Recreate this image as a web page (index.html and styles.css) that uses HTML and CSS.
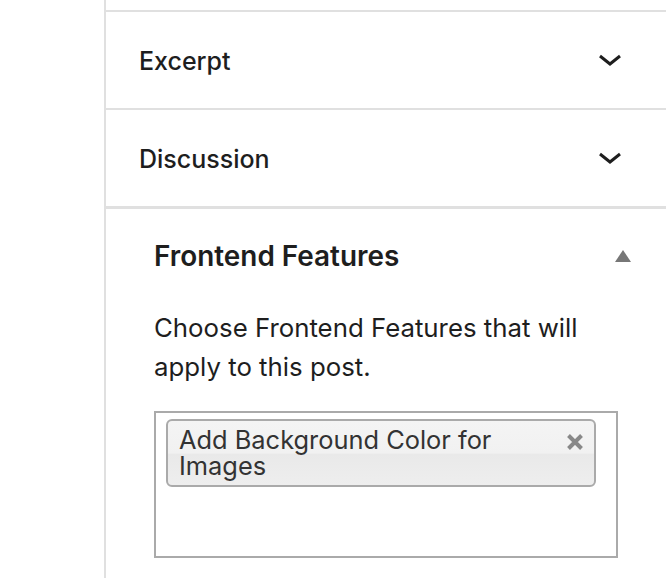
FILE: index.html
```html
<!DOCTYPE html>
<html>
<head>
<meta charset="utf-8">
<link rel="stylesheet" href="styles.css">
</head>
<body>
<div class="page">
  <div class="gutter"></div>
  <div class="sidebar">
    <div class="panel">
      <span class="panel-title">Excerpt</span>
      <svg class="chevron" width="24" height="24" viewBox="0 0 24 24"><path d="M2 7 L12 15 L22 7" fill="none" stroke="#1e1e1e" stroke-width="3"/></svg>
    </div>
    <div class="panel">
      <span class="panel-title">Discussion</span>
      <svg class="chevron" width="24" height="24" viewBox="0 0 24 24"><path d="M2 7 L12 15 L22 7" fill="none" stroke="#1e1e1e" stroke-width="3"/></svg>
    </div>
    <div class="metabox">
      <div class="metabox-head">
        <h2 class="metabox-title">Frontend Features</h2>
        <span class="toggle"></span>
      </div>
      <p class="desc">Choose Frontend Features that will apply to this post.</p>
      <div class="select">
        <div class="choice">
          <span class="choice-text">Add Background Color for Images</span>
          <svg class="remove" width="18" height="18" viewBox="0 0 18 18"><path d="M2.5 2.5 L15.5 15.5 M15.5 2.5 L2.5 15.5" stroke="#888" stroke-width="4" stroke-linecap="butt"/></svg>
        </div>
      </div>
    </div>
  </div>
</div>
</body>
</html>
```

FILE: styles.css
```css
html, body {
  margin: 0;
  padding: 0;
  background: #fff;
}
body {
  font-family: Inter, "Noto Sans", sans-serif;
  color: #1e1e1e;
}
.page {
  display: flex;
  height: 578px;
  overflow: hidden;
}
.gutter {
  width: 104px;
  flex: none;
}
.sidebar {
  flex: 1;
  border-left: 2px solid #e0e0e0;
  padding-top: 10px;
}
.panel {
  display: flex;
  align-items: center;
  justify-content: space-between;
  height: 96px;
  border-top: 2px solid #e0e0e0;
  padding: 0 44px 0 33px;
}
.panel-title {
  font-size: 25px;
  font-weight: 500;
  margin-top: 2px;
}
.chevron {
  display: block;
  margin-top: 2px;
}
.metabox {
  border-top: 3px solid #e0e0e0;
  padding: 0 35px 0 48px;
}
.metabox-head {
  display: flex;
  align-items: center;
  justify-content: space-between;
  height: 91px;
}
.metabox-title {
  margin: 0;
  font-size: 27.9px;
  font-weight: 600;
  margin-top: 2px;
}
.toggle {
  width: 0;
  height: 0;
  border-left: 8px solid transparent;
  border-right: 8px solid transparent;
  border-bottom: 12px solid #777;
  margin-top: 2px;
}
.desc {
  margin: 8px 0 25px;
  font-size: 25.8px;
  line-height: 39px;
  color: #1e1e1e;
  padding-right: 20px;
}
.select {
  border: 2px solid #aaa;
  padding: 6px 0 0 10px;
  box-sizing: border-box;
  width: 464px;
  height: 147px;
}
.choice {
  display: flex;
  justify-content: space-between;
  align-items: flex-start;
  width: 430px;
  height: 68px;
  box-sizing: border-box;
  border: 2px solid #aaa;
  border-radius: 6px;
  background: linear-gradient(#f4f4f4 0%, #f1f1f1 50%, #e9e9e9 52%, #eeeeee 100%);
  padding: 6px 10px 6px 11px;
  color: #333;
}
.choice-text {
  font-size: 25.4px;
  line-height: 26px;
  width: 370px;
}
.remove {
  display: block;
  margin-top: 6px;
  flex: none;
}
```
